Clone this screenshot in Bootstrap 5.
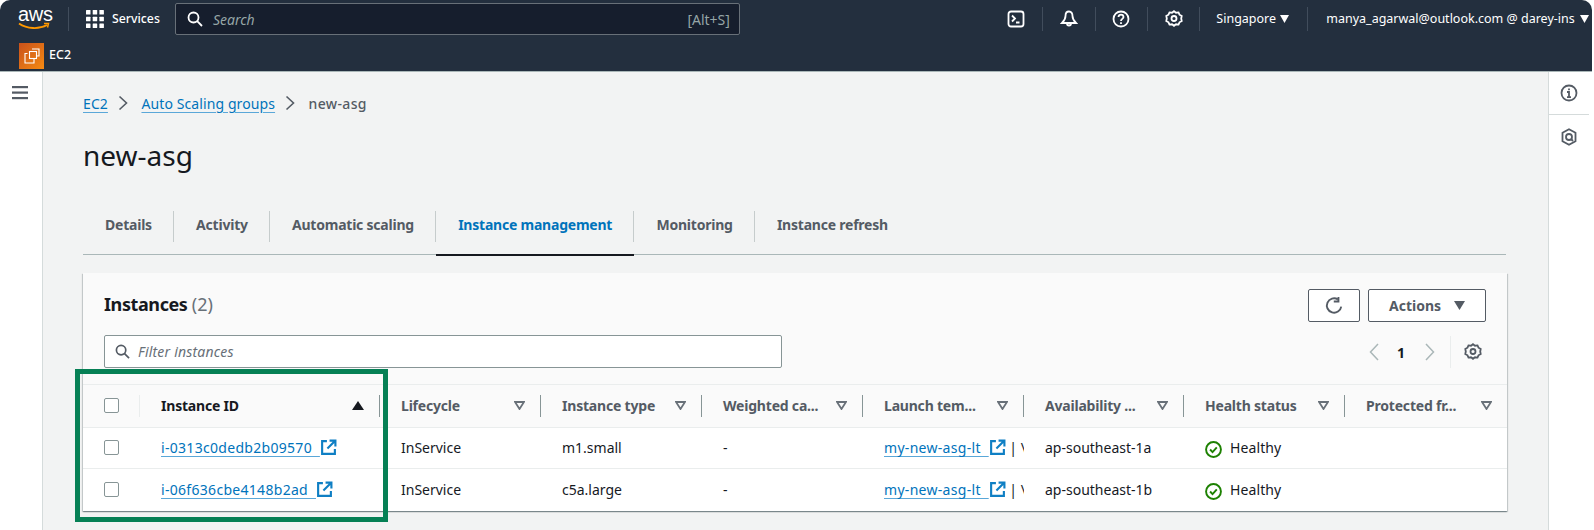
<!doctype html>
<html lang="en">
<head>
<meta charset="utf-8">
<title>new-asg</title>
<link href="https://cdn.jsdelivr.net/npm/bootstrap@5.3.0/dist/css/bootstrap.min.css" rel="stylesheet">
<style>
html,body{height:530px;overflow:hidden;background:#fff}
body{font-family:"Noto Sans","Liberation Sans",sans-serif;font-size:14px;color:#16191f}
.shell{height:530px;width:1592px}
.topbar{height:72px;background:#232f3e;color:#fff;border-radius:10px 10px 0 0;border-bottom:1px solid #aab7b8;flex:none}
.row-a{height:40px;padding-left:18px;padding-bottom:2px}
.row-b{height:31px;padding:3px 0 0 19px}
.awslogo{width:32px;line-height:1;position:relative;height:30px;font-family:"Liberation Sans",sans-serif;font-size:20px;letter-spacing:-.3px;text-align:center}
.awslogo svg{display:block;margin-top:-2px}
.vsep{width:1px;height:24px;background:#414d5c;flex:none}
.logosep{margin:0 17px 0 18px}
.svc{font-size:12.3px;font-weight:500;margin:0 15px 0 8px}
.searchbox{width:565px;height:32px;background:#161e2d;border:1px solid #687078;border-radius:2px;color:#95a5a6;padding:0 9px 0 11px;font-size:14px}
.searchbox i{padding-left:10px}
.ticon{width:51.4px;justify-content:center}
.region{font-size:12.5px;margin:0 18px 0 16px;white-space:nowrap}
.region svg{margin-left:1px}
.who{font-size:12.5px;margin:0 3px 0 18px;white-space:nowrap}
.who svg{margin-left:2px}
.ec2badge{width:25px;height:26px;background:linear-gradient(135deg,#c8511b,#f58a12);display:flex;align-items:center;justify-content:center}
.ec2txt{font-size:12.5px;font-weight:500;margin:3px 0 0 5px}
.leftrail{width:43px;background:#fff;border-right:1px solid #d5dbdb;flex:none;padding:9px 0 0 12px}
.rightrail{width:44px;background:#fff;border-left:1px solid #d5dbdb;flex:none;padding-right:3px}
.rail-cell{height:43px;display:flex;align-items:center;justify-content:center;border-bottom:1px solid #d5dbdb}
.content{background:#f2f3f3;position:relative;min-width:0;padding:0 42px 0 40px;overflow:hidden}
.crumbs{height:65px;font-size:14px;margin:0;color:#545b64;align-items:center;padding-bottom:3px}
.crumbs a,.lnk{color:#0073bb;text-decoration:underline;text-decoration-color:#5aa7d8;text-underline-offset:3px}
.crumbs a{letter-spacing:.1px}
.crumbs span{letter-spacing:.35px;font-weight:500}
.crumbs svg{margin:0 13.500px 0 10px}
.pagetitle{font-size:28px;font-weight:400;line-height:36px;margin:0 0 36px;color:#16191f}
.tabsbar{height:46px;border-bottom:1px solid #aab7b8}
.tabitem{height:46px;display:flex;align-items:center;position:relative;font-weight:700;color:#545b64;text-decoration:none;padding:0 22.200px 16px 22px;letter-spacing:-.22px}
.tabitem::after{content:"";position:absolute;right:0;top:2px;height:31px;width:1px;background:#c6cccc}
.tabitem:last-child::after{display:none}
.tabitem.on{color:#0073bb}
.tabitem.on::before{content:"";position:absolute;left:0;right:0;bottom:-1px;height:2px;background:#16191f}
.panel{margin-top:18px;width:1424px;background:#fafafa;border:0;border-radius:0;box-shadow:0 1px 1px 0 rgba(0,28,36,.3),1px 1px 1px 0 rgba(0,28,36,.15),-1px 1px 1px 0 rgba(0,28,36,.15)}
.panelhead{height:112px;padding:16px 21px 0 21px;border-bottom:1px solid #eaeded}
.paneltitle{font-size:18px;font-weight:700;line-height:30px;letter-spacing:-.4px}
.paneltitle span{font-weight:400;color:#687078;letter-spacing:0}
.filterbox{width:678px;height:33px;background:#fff;border:1px solid #879596;border-radius:2px;margin-top:16px;padding:0 10px;color:#687078;font-style:italic;letter-spacing:.2px}
.filterbox svg{margin-right:8px}
.awsbtn{height:33px;background:#fff;border:1px solid #545b64;border-radius:2px;color:#545b64;font-weight:700;font-size:14px;padding:0;display:flex;align-items:center;justify-content:center}
.awsbtn svg.car{margin-left:13px}
.btn-r{width:52px;margin-right:8px}
.btn-a{width:118px}
.pager{height:32px;margin-top:14px;margin-right:4px;color:#16191f;font-weight:700}
.pager .n{margin:0 20px 0 18px}
.pager .psep{width:1px;height:32px;background:#eaeded;margin:0 13px 0 15px}
.grid-t{table-layout:fixed;width:1424px;margin:0;--bs-table-bg:transparent}
.grid-t th{height:42px;padding:0;border-bottom:1px solid #eaeded;background:#fafafa;font-weight:700;color:#545b64;vertical-align:middle;letter-spacing:-.2px}
.grid-t td{height:41px;padding:0 0 0 21px;background:#fff;border-bottom:1px solid #eaeded;vertical-align:middle;overflow:hidden;white-space:nowrap;color:#16191f}
.grid-t tr:last-child td{border-bottom:0;height:43px}
.cellhd{height:22px;display:flex;align-items:center;justify-content:space-between;padding:0 15px 0 21px;border-right:1px solid #879596}
.cellhd.last{border-right:0}
.cellhd.plain{border-right-color:#eaeded;padding:0 0 0 21px}
.cellhd.sel{color:#16191f}
.boxc{width:15px;height:15px;border:1px solid #879596;border-radius:2px;background:#fff;display:block}
.lnk{letter-spacing:.3px;word-spacing:4px}
.extic{margin-left:0;vertical-align:-3px}
.gr{color:#1d8102;letter-spacing:.1px}
.hl{position:absolute;left:32px;top:297px;width:313px;height:153px;border:5px solid #068055;pointer-events:none}
</style>
</head>
<body>
<div class="shell d-flex flex-column">
  <header class="topbar">
    <div class="row-a d-flex align-items-center">
      <div class="awslogo">aws
        <svg width="32" height="9" viewBox="0 0 32 9"><path d="M1 1.500C9 7 21 7.500 29 3" fill="none" stroke="#f90" stroke-width="1.800"/><path d="M26 1.500l4.500 0-1 4" fill="none" stroke="#f90" stroke-width="1.500"/></svg>
      </div>
      <span class="vsep logosep"></span>
      <svg width="18" height="18" viewBox="0 0 18 18" fill="#fff"><rect width="4.500" height="4.500" rx=".5"/><rect x="6.700" width="4.500" height="4.500" rx=".5"/><rect x="13.400" width="4.500" height="4.500" rx=".5"/><rect y="6.700" width="4.500" height="4.500" rx=".5"/><rect x="6.700" y="6.700" width="4.500" height="4.500" rx=".5"/><rect x="13.400" y="6.700" width="4.500" height="4.500" rx=".5"/><rect y="13.400" width="4.500" height="4.500" rx=".5"/><rect x="6.700" y="13.400" width="4.500" height="4.500" rx=".5"/><rect x="13.400" y="13.400" width="4.500" height="4.500" rx=".5"/></svg>
      <span class="svc">Services</span>
      <div class="searchbox d-flex align-items-center">
        <svg width="16" height="16" viewBox="0 0 16 16" fill="none" stroke="#fff" stroke-width="1.800"><circle cx="6.500" cy="6.500" r="5"/><path d="M10.200 10.200L15 15"/></svg>
        <i class="flex-grow-1">Search</i><span>[Alt+S]</span>
      </div>
      <div class="d-flex align-items-center ms-auto">
        <div class="ticon d-flex">
          <svg width="18" height="18" viewBox="0 0 18 18" fill="none" stroke="#fff" stroke-width="1.800"><rect x="1.500" y="1.500" width="15" height="15" rx="2.500"/><path d="M5 5.500l3 3-3 3M9 12.500h3.500"/></svg>
        </div>
        <span class="vsep"></span>
        <div class="ticon d-flex">
          <svg width="18" height="18" viewBox="0 0 18 18" fill="none" stroke="#fff" stroke-width="1.800"><path d="M9 1.500c-2.500 0-3.500 2-3.500 4.500 0 3-1.500 5-3.500 7h14c-2-2-3.500-4-3.500-7 0-2.500-1-4.500-3.500-4.500zM7 13.500a2 2 0 0 0 4 0"/></svg>
        </div>
        <span class="vsep"></span>
        <div class="ticon d-flex">
          <svg width="18" height="18" viewBox="0 0 18 18" fill="none" stroke="#fff" stroke-width="1.800"><circle cx="9" cy="9" r="7.500"/><path d="M6.500 7c0-3.300 5-3.300 5 0 0 2-2.500 1.800-2.500 4"/><path d="M9 12.300v1.700"/></svg>
        </div>
        <span class="vsep"></span>
        <div class="ticon d-flex">
          <svg width="18" height="18" viewBox="0 0 18 18" fill="none" stroke="#fff" stroke-width="1.800"><path d="M9 1.200l2 1.500 2.500-.3 1 2.300 2.200 1.200-.5 2.600.5 2.600-2.200 1.200-1 2.300-2.500-.3-2 1.500-2-1.500-2.500.3-1-2.300-2.200-1.200.5-2.600-.5-2.600 2.200-1.200 1-2.300 2.500.3z"/><circle cx="9" cy="8.500" r="2.500"/></svg>
        </div>
        <span class="vsep"></span>
        <span class="region">Singapore <svg width="9" height="8" viewBox="0 0 9 8" fill="#fff"><path d="M0 0h9L4.500 8z"/></svg></span>
        <span class="vsep"></span>
        <span class="who">manya_agarwal@outlook.com @ darey-ins <svg width="9" height="8" viewBox="0 0 9 8" fill="#fff"><path d="M0 0h9L4.500 8z"/></svg></span>
      </div>
    </div>
    <div class="row-b d-flex align-items-start">
      <span class="ec2badge"><svg width="18" height="18" viewBox="0 0 18 18" fill="none" stroke="#fff" stroke-width="1.100"><rect x="6.500" y="4.500" width="7" height="7"/><path d="M9 2h7v7h-2M4.500 6.500H2v9.500h9v-4.500"/></svg></span>
      <span class="ec2txt">EC2</span>
    </div>
  </header>
  <div class="d-flex flex-grow-1" style="min-height:0">
    <aside class="leftrail">
      <svg width="16" height="14" viewBox="0 0 16 14" fill="#545b64"><rect width="16" height="2.200"/><rect y="5.500" width="16" height="2.200"/><rect y="11" width="16" height="2.200"/></svg>
    </aside>
    <main class="content flex-grow-1">
      <nav class="crumbs d-flex">
        <a href="#">EC2</a>
        <svg width="10" height="16" viewBox="0 0 10 16" fill="none" stroke="#545b64" stroke-width="1.600"><path d="M1.500 1.500L8.500 8l-7 6.500"/></svg>
        <a href="#">Auto Scaling groups</a>
        <svg width="10" height="16" viewBox="0 0 10 16" fill="none" stroke="#545b64" stroke-width="1.600"><path d="M1.500 1.500L8.500 8l-7 6.500"/></svg>
        <span>new-asg</span>
      </nav>
      <h1 class="pagetitle">new-asg</h1>
      <nav class="tabsbar d-flex">
        <a class="tabitem" href="#">Details</a>
        <a class="tabitem" href="#">Activity</a>
        <a class="tabitem" href="#">Automatic scaling</a>
        <a class="tabitem on" href="#">Instance management</a>
        <a class="tabitem" href="#">Monitoring</a>
        <a class="tabitem" href="#">Instance refresh</a>
      </nav>
      <section class="card panel">
        <div class="panelhead d-flex justify-content-between">
          <div>
            <div class="paneltitle">Instances <span>(2)</span></div>
            <div class="filterbox d-flex align-items-center">
              <svg width="15" height="15" viewBox="0 0 16 16" fill="none" stroke="#545b64" stroke-width="1.800"><circle cx="6.500" cy="6.500" r="5"/><path d="M10.200 10.200L15 15"/></svg>
              Filter instances
            </div>
          </div>
          <div class="d-flex flex-column align-items-end">
            <div class="d-flex">
              <button class="btn awsbtn btn-r" type="button" aria-label="Refresh"><svg width="20" height="20" viewBox="0 0 18 18" fill="none" stroke="#545b64" stroke-width="1.700"><path d="M15.500 9.500a6.500 6.500 0 1 1-3-6.500"/><path d="M13 .8v4.200H8.800"/></svg></button>
              <button class="btn awsbtn btn-a" type="button">Actions <svg class="car" width="11" height="9" viewBox="0 0 11 9" fill="#545b64"><path d="M0 0h11L5.500 9z"/></svg></button>
            </div>
            <div class="pager d-flex align-items-center">
              <svg width="10" height="18" viewBox="0 0 10 18" fill="none" stroke="#aab7b8" stroke-width="1.500"><path d="M9 1L1.500 9 9 17"/></svg>
              <span class="n">1</span>
              <svg width="10" height="18" viewBox="0 0 10 18" fill="none" stroke="#aab7b8" stroke-width="1.500"><path d="M1 1l7.500 8L1 17"/></svg>
              <span class="psep"></span>
              <svg width="18" height="18" viewBox="0 0 18 18" fill="none" stroke="#545b64" stroke-width="1.800"><path d="M9 1.200l2 1.500 2.500-.3 1 2.300 2.200 1.200-.5 2.600.5 2.600-2.200 1.200-1 2.300-2.500-.3-2 1.500-2-1.500-2.500.3-1-2.300-2.200-1.200.5-2.600-.5-2.600 2.200-1.200 1-2.300 2.500.3z"/><circle cx="9" cy="8.500" r="2.500"/></svg>
            </div>
          </div>
        </div>
        <table class="table grid-t">
          <colgroup><col style="width:57px"><col style="width:240px"><col style="width:161px"><col style="width:161px"><col style="width:161px"><col style="width:161px"><col style="width:160px"><col style="width:161px"><col></colgroup>
          <thead><tr>
            <th><div class="cellhd plain"><span class="boxc"></span></div></th>
            <th><div class="cellhd sel"><span>Instance ID</span><svg width="12" height="9" viewBox="0 0 12 9" fill="#16191f"><path d="M0 9h12L6 0z"/></svg></div></th>
            <th><div class="cellhd"><span>Lifecycle</span><svg width="11" height="9" viewBox="0 0 11 9" fill="none" stroke="#687078" stroke-width="1.800"><path d="M1 1h9L5.500 8z"/></svg></div></th>
            <th><div class="cellhd"><span>Instance type</span><svg width="11" height="9" viewBox="0 0 11 9" fill="none" stroke="#687078" stroke-width="1.800"><path d="M1 1h9L5.500 8z"/></svg></div></th>
            <th><div class="cellhd"><span>Weighted ca...</span><svg width="11" height="9" viewBox="0 0 11 9" fill="none" stroke="#687078" stroke-width="1.800"><path d="M1 1h9L5.500 8z"/></svg></div></th>
            <th><div class="cellhd"><span>Launch tem...</span><svg width="11" height="9" viewBox="0 0 11 9" fill="none" stroke="#687078" stroke-width="1.800"><path d="M1 1h9L5.500 8z"/></svg></div></th>
            <th><div class="cellhd"><span>Availability ...</span><svg width="11" height="9" viewBox="0 0 11 9" fill="none" stroke="#687078" stroke-width="1.800"><path d="M1 1h9L5.500 8z"/></svg></div></th>
            <th><div class="cellhd"><span>Health status</span><svg width="11" height="9" viewBox="0 0 11 9" fill="none" stroke="#687078" stroke-width="1.800"><path d="M1 1h9L5.500 8z"/></svg></div></th>
            <th><div class="cellhd last"><span>Protected fr...</span><svg width="11" height="9" viewBox="0 0 11 9" fill="none" stroke="#687078" stroke-width="1.800"><path d="M1 1h9L5.500 8z"/></svg></div></th>
          </tr></thead>
          <tbody>
            <tr class="first-r">
              <td><span class="boxc"></span></td>
              <td><a class="lnk" href="#">i-0313c0dedb2b09570&nbsp;</a><svg class="extic" width="17" height="17" viewBox="0 0 16 16" fill="none" stroke="#0f7fc4" stroke-width="2"><path d="M6.500 2H2v12h12V9.500M9 1.500h5.500V7M14.500 1.500L7 9"/></svg></td>
              <td>InService</td><td>m1.small</td><td>-</td>
              <td><a class="lnk" href="#">my-new-asg-lt&nbsp;</a><svg class="extic" width="17" height="17" viewBox="0 0 16 16" fill="none" stroke="#0f7fc4" stroke-width="2"><path d="M6.500 2H2v12h12V9.500M9 1.500h5.500V7M14.500 1.500L7 9"/></svg> | \</td>
              <td>ap-southeast-1a</td>
              <td class="gr"><svg class="me-2" width="17" height="17" viewBox="0 0 16 16" fill="none" stroke="#1d8102" stroke-width="1.800"><circle cx="8" cy="8" r="7"/><path d="M4.800 8l2.300 2.400 4-4.400"/></svg>Healthy</td>
              <td></td>
            </tr>
            <tr>
              <td><span class="boxc"></span></td>
              <td><a class="lnk" href="#">i-06f636cbe4148b2ad&nbsp;</a><svg class="extic" width="17" height="17" viewBox="0 0 16 16" fill="none" stroke="#0f7fc4" stroke-width="2"><path d="M6.500 2H2v12h12V9.500M9 1.500h5.500V7M14.500 1.500L7 9"/></svg></td>
              <td>InService</td><td>c5a.large</td><td>-</td>
              <td><a class="lnk" href="#">my-new-asg-lt&nbsp;</a><svg class="extic" width="17" height="17" viewBox="0 0 16 16" fill="none" stroke="#0f7fc4" stroke-width="2"><path d="M6.500 2H2v12h12V9.500M9 1.500h5.500V7M14.500 1.500L7 9"/></svg> | \</td>
              <td>ap-southeast-1b</td>
              <td class="gr"><svg class="me-2" width="17" height="17" viewBox="0 0 16 16" fill="none" stroke="#1d8102" stroke-width="1.800"><circle cx="8" cy="8" r="7"/><path d="M4.800 8l2.300 2.400 4-4.400"/></svg>Healthy</td>
              <td></td>
            </tr>
          </tbody>
        </table>
      </section>
      <div class="hl"></div>
    </main>
    <aside class="rightrail">
      <div class="rail-cell"><svg width="18" height="18" viewBox="0 0 18 18" fill="none" stroke="#545b64" stroke-width="1.800"><circle cx="9" cy="9" r="7.500"/><path d="M7 8h2v5M7 13.200h4M9 4.500v1.800"/></svg></div>
      <div class="rail-cell border-0"><svg width="16" height="18" viewBox="0 0 16 18" fill="none" stroke="#545b64" stroke-width="1.800"><path d="M8 1.200l6.500 3.600v8.400L8 16.800 1.500 13.200V4.800z"/><circle cx="8" cy="9" r="3"/><path d="M10 11l2 2"/></svg></div>
    </aside>
  </div>
</div>
<script src="https://cdn.jsdelivr.net/npm/bootstrap@5.3.0/dist/js/bootstrap.bundle.min.js"></script>
</body>
</html>
